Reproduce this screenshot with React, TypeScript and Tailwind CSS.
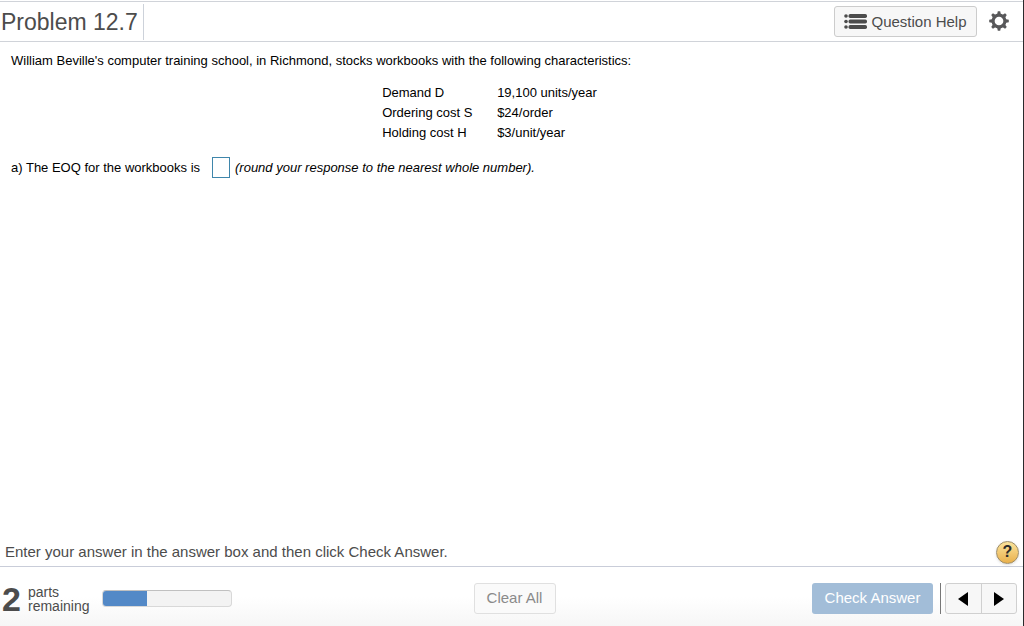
const givens = [
  { label: "Demand D", value: "19,100 units/year" },
  { label: "Ordering cost S", value: "$24/order" },
  { label: "Holding cost H", value: "$3/unit/year" },
];

function ListIcon() {
  return (
    <svg width="23" height="15" viewBox="0 0 23 15" fill="#4c4c4c" aria-hidden="true">
      {[2, 7.5, 13].map((y) => (
        <g key={y}>
          <circle cx="2" cy={y} r="1.8" />
          <rect x="4.5" y={y - 1.9} width="18.5" height="3.8" rx="1.7" />
        </g>
      ))}
    </svg>
  );
}

function GearIcon() {
  return (
    <svg width="20" height="20" viewBox="-10 -10 20 20" aria-hidden="true">
      {[0, 45, 90, 135, 180, 225, 270, 315].map((a) => (
        <path key={a} d="M-2 -6 L-1.2 -9.8 H1.2 L2 -6 Z" fill="#58585a" transform={`rotate(${a})`} />
      ))}
      <circle r="5.9" fill="none" stroke="#58585a" strokeWidth="3.1" />
    </svg>
  );
}

function Header() {
  return (
    <header className="mt-px flex h-[41px] items-center border-y border-[#d0d3d9]">
      <h1 className="flex h-9 items-center border-r border-[#cdd2da] pr-[5px] pl-px text-[23px] leading-7 text-[#4c4c4c]">
        Problem 12.7
      </h1>
      <div className="ml-auto flex items-center gap-3 pr-3.5">
        <button
          type="button"
          className="flex h-[31px] w-[143px] items-center justify-center gap-1 rounded-[3px] border border-[#ccc] bg-[#f7f7f7] text-[15px] leading-5 whitespace-nowrap text-[#4c4c4c]"
        >
          <ListIcon />
          Question Help
        </button>
        <button type="button" aria-label="Settings" className="pb-0.5">
          <GearIcon />
        </button>
      </div>
    </header>
  );
}

function Question() {
  return (
    <main className="flex-1 px-[11px] pt-[9px] text-[13px] leading-5 text-black">
      <p>William Beville's computer training school, in Richmond, stocks workbooks with the following characteristics:</p>
      <div className="mt-3 flex justify-center pr-11">
        <table>
          <tbody>
            {givens.map((row) => (
              <tr key={row.label}>
                <th scope="row" className="w-[115px] p-0 text-left font-normal">
                  {row.label}
                </th>
                <td className="p-0">{row.value}</td>
              </tr>
            ))}
          </tbody>
        </table>
      </div>
      <div className="mt-3.5 flex items-center gap-[5px]">
        <label htmlFor="eoq" className="min-w-[196px]">
          a) The EOQ for the workbooks is
        </label>
        <input id="eoq" type="text" className="h-[21px] w-[18px] border border-[#3f86ab] bg-white text-center outline-none" />
        <em>(round your response to the nearest whole number).</em>
      </div>
    </main>
  );
}

function Footer() {
  return (
    <footer>
      <div className="flex h-[28px] items-center justify-between pr-1 pl-[5px] text-[15px] leading-5 text-[#4c4c4c]">
        <p>Enter your answer in the answer box and then click Check Answer.</p>
        <button
          type="button"
          aria-label="Help"
          className="flex size-[23px] items-center justify-center rounded-full border border-[#9c8c68] bg-linear-to-b from-[#fbe39a] to-[#e9b04a] text-[16px] font-bold text-[#2b2b2b] shadow-sm"
        >
          ?
        </button>
      </div>
      <div className="flex h-[60px] items-center justify-between border-t border-[#c9cdd9] bg-linear-to-b from-white from-50% to-[#f6f6f6] pt-1 pr-1.5 pl-0.5 text-[15px] text-[#4c4c4c]">
        <div className="flex flex-1 items-center">
          <span className="w-[26px] text-[34px] leading-8 font-bold">2</span>
          <span className="w-[74px] text-[14px] leading-[14px]">
            parts
            <br />
            remaining
          </span>
          <div
            role="progressbar"
            aria-label="Progress"
            aria-valuenow={34}
            aria-valuemin={0}
            aria-valuemax={100}
            className="h-[17px] w-[130px] overflow-hidden rounded-[4px] border border-[#d8d8d8] border-t-[#c0c0c0] bg-[#f3f3f3]"
          >
            <div className="h-full w-[34%] bg-[#5389c7]" />
          </div>
        </div>
        <button type="button" className="ml-2.5 h-[31px] w-[82px] rounded-[3px] border border-[#e0e0e0] bg-[#fafafa] text-[#8a8a8a]">
          Clear All
        </button>
        <div className="flex flex-1 items-center justify-end">
          <button type="button" className="h-[31px] w-[121px] rounded-[3px] bg-[#a2bdd8] text-white">
            Check Answer
          </button>
          <div className="mr-1 ml-[7px] h-[31px] border-l border-[#777]" />
          <div className="flex h-[31px] w-[72px] divide-x divide-[#d0d0d0] rounded-[3px] border border-[#d0d0d0] bg-[#f7f7f7]">
            <button type="button" aria-label="Previous" className="flex flex-1 items-center justify-center">
              <svg width="10" height="14" viewBox="0 0 10 14" aria-hidden="true">
                <path d="M10 0 V14 L0 7 Z" />
              </svg>
            </button>
            <button type="button" aria-label="Next" className="flex flex-1 items-center justify-center">
              <svg width="10" height="14" viewBox="0 0 10 14" aria-hidden="true">
                <path d="M0 0 V14 L10 7 Z" />
              </svg>
            </button>
          </div>
        </div>
      </div>
    </footer>
  );
}

export default function App() {
  return (
    <div className="flex min-h-screen flex-col border-r border-[#2a2a2c] bg-white font-['Liberation_Sans',Arial,sans-serif]">
      <Header />
      <Question />
      <Footer />
    </div>
  );
}
